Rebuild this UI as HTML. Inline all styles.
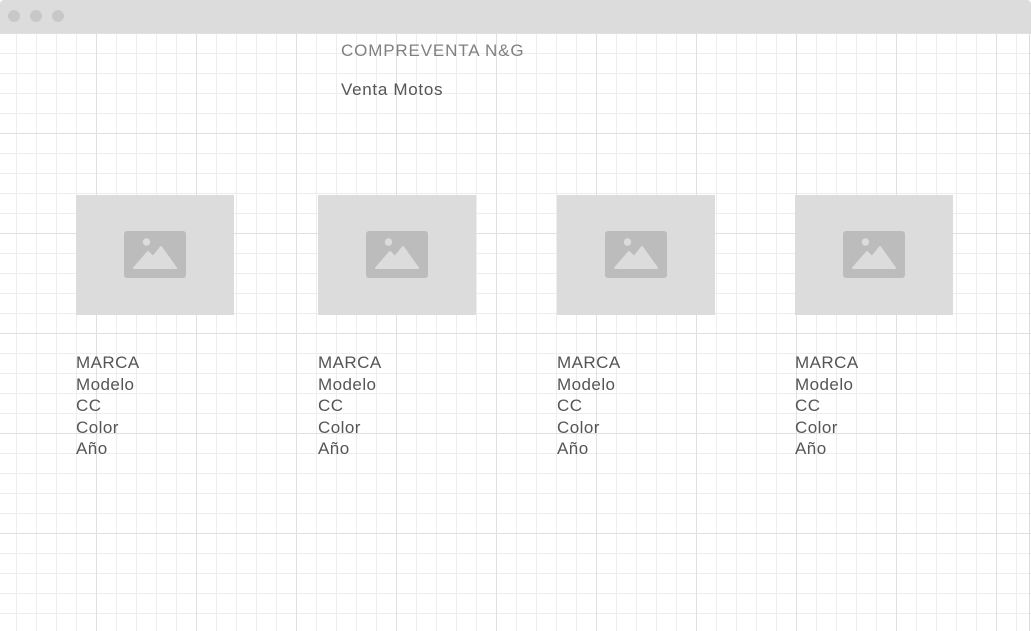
<!DOCTYPE html>
<html><head><meta charset="utf-8"><style>
html,body{margin:0;padding:0}
body{width:1031px;height:631px;position:relative;overflow:hidden;background:#fff;font-family:"Liberation Sans",sans-serif;
background-image:
linear-gradient(to right,#e0e0e0 1px,transparent 1px),
linear-gradient(to bottom,#e0e0e0 1px,transparent 1px),
linear-gradient(to right,#ededed 1px,transparent 1px),
linear-gradient(to bottom,#ededed 1px,transparent 1px);
background-size:100px 100px,100px 100px,20px 20px,20px 20px;
background-position:96px 133px,96px 133px,16px 13px,16px 13px;}
.bar{position:absolute;left:0;top:0;width:1031px;height:33px;background:#dcdcdc;border-radius:4px 4px 0 0}
.dot{position:absolute;top:10px;width:12px;height:12px;border-radius:50%;background:#c8c8c8}
.rb{position:absolute;right:1px;top:33px;width:1px;height:598px;background:#dcdcdc}
.t{position:absolute;color:#777;font-size:17px}
.img{position:absolute;top:195px;width:158px;height:120px;background:#dcdcdc}
.img svg{position:absolute;left:48px;top:36px}
.txt{position:absolute;top:352px;font-size:17px;letter-spacing:0.45px;line-height:21.5px;color:#555}
</style></head><body>
<div class="bar"><div class="dot" style="left:8px"></div><div class="dot" style="left:30px"></div><div class="dot" style="left:52px"></div></div>
<div class="rb"></div>
<div class="t" style="left:341px;top:41px;color:#808080;letter-spacing:0.85px">COMPREVENTA N&amp;G</div>
<div class="t" style="left:341px;top:80px;color:#555;letter-spacing:0.7px">Venta Motos</div>

<div class="img" style="left:76px"><svg width="62" height="47"><rect width="62" height="47" rx="3" fill="#bcbcbc"/><circle cx="22.5" cy="11" r="3.7" fill="#dcdcdc"/><path d="M10 37 L24 21 L29 26 L37 16 L52 37 Z" fill="#dcdcdc" stroke="#dcdcdc" stroke-width="2" stroke-linejoin="round"/></svg></div>
<div class="img" style="left:318px"><svg width="62" height="47"><rect width="62" height="47" rx="3" fill="#bcbcbc"/><circle cx="22.5" cy="11" r="3.7" fill="#dcdcdc"/><path d="M10 37 L24 21 L29 26 L37 16 L52 37 Z" fill="#dcdcdc" stroke="#dcdcdc" stroke-width="2" stroke-linejoin="round"/></svg></div>
<div class="img" style="left:557px"><svg width="62" height="47"><rect width="62" height="47" rx="3" fill="#bcbcbc"/><circle cx="22.5" cy="11" r="3.7" fill="#dcdcdc"/><path d="M10 37 L24 21 L29 26 L37 16 L52 37 Z" fill="#dcdcdc" stroke="#dcdcdc" stroke-width="2" stroke-linejoin="round"/></svg></div>
<div class="img" style="left:795px"><svg width="62" height="47"><rect width="62" height="47" rx="3" fill="#bcbcbc"/><circle cx="22.5" cy="11" r="3.7" fill="#dcdcdc"/><path d="M10 37 L24 21 L29 26 L37 16 L52 37 Z" fill="#dcdcdc" stroke="#dcdcdc" stroke-width="2" stroke-linejoin="round"/></svg></div>

<div class="txt" style="left:76px">MARCA<br>Modelo<br>CC<br>Color<br>Año</div>
<div class="txt" style="left:318px">MARCA<br>Modelo<br>CC<br>Color<br>Año</div>
<div class="txt" style="left:557px">MARCA<br>Modelo<br>CC<br>Color<br>Año</div>
<div class="txt" style="left:795px">MARCA<br>Modelo<br>CC<br>Color<br>Año</div>
</body></html>
